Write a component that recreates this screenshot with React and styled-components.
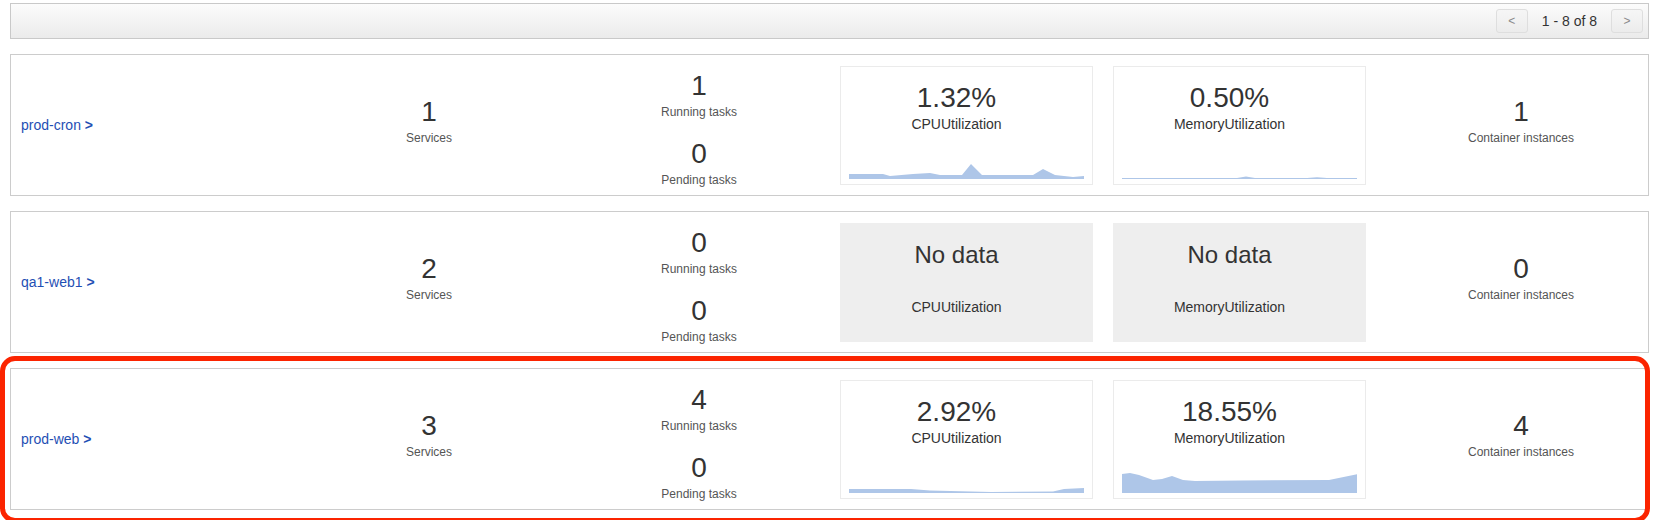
import React from "react";
import styled, { createGlobalStyle } from "styled-components";

const clusters = [
  {
    name: "prod-cron",
    services: 1,
    running: 1,
    pending: 0,
    cpu: {
      value: "1.32%",
      points: [
        [0, 5], [34, 5], [41, 3], [64, 5], [81, 6], [91, 4], [113, 4],
        [122, 15], [133, 4], [184, 4], [194, 10], [206, 4], [224, 2], [235, 3],
      ],
    },
    memory: {
      value: "0.50%",
      points: [
        [0, 1], [115, 1], [124, 2.5], [133, 1], [185, 1], [195, 1.8],
        [205, 1], [236, 1],
      ],
    },
    instances: 1,
  },
  {
    name: "qa1-web1",
    services: 2,
    running: 0,
    pending: 0,
    cpu: null,
    memory: null,
    instances: 0,
  },
  {
    name: "prod-web",
    services: 3,
    running: 4,
    pending: 0,
    cpu: {
      value: "2.92%",
      points: [
        [0, 4], [62, 4], [81, 2.5], [142, 1], [204, 1.5], [215, 4], [235, 5],
      ],
    },
    memory: {
      value: "18.55%",
      points: [
        [0, 19], [8, 20], [17, 18], [31, 13], [40, 14], [50, 17], [61, 13],
        [73, 12], [119, 12.5], [207, 13], [236, 19],
      ],
    },
    instances: 4,
    highlighted: true,
  },
];

export default function App() {
  return (
    <>
      <GlobalStyle />
      <Page>
        <Toolbar>
          <PageButton>&lt;</PageButton>
          <PageInfo>1 - 8 of 8</PageInfo>
          <PageButton>&gt;</PageButton>
        </Toolbar>
        <List>
          {clusters.map((c) => (
            <RowWrap key={c.name}>
              <ClusterRow cluster={c} />
              {c.highlighted && <Highlight />}
            </RowWrap>
          ))}
        </List>
      </Page>
    </>
  );
}

function ClusterRow({ cluster }) {
  return (
    <Row>
      <NameCell>
        <ClusterLink href="#">
          {cluster.name} <b>&gt;</b>
        </ClusterLink>
      </NameCell>
      <StatCell>
        <Stat>
          <Big>{cluster.services}</Big>
          <Label>Services</Label>
        </Stat>
      </StatCell>
      <TaskCell>
        <Stat>
          <Big>{cluster.running}</Big>
          <Label>Running tasks</Label>
        </Stat>
        <Stat>
          <Big>{cluster.pending}</Big>
          <Label>Pending tasks</Label>
        </Stat>
      </TaskCell>
      <MetricCard metric={cluster.cpu} label="CPUUtilization" />
      <MetricCard metric={cluster.memory} label="MemoryUtilization" />
      <StatCell $shift>
        <Stat>
          <Big>{cluster.instances}</Big>
          <Label>Container instances</Label>
        </Stat>
      </StatCell>
    </Row>
  );
}

function MetricCard({ metric, label }) {
  if (!metric) {
    return (
      <Card $empty>
        <CardText>
          <NoData>No data</NoData>
          <MetricName $gap>{label}</MetricName>
        </CardText>
      </Card>
    );
  }
  return (
    <Card>
      <CardText>
        <Big>{metric.value}</Big>
        <MetricName>{label}</MetricName>
      </CardText>
      <Spark points={metric.points} />
    </Card>
  );
}

function Spark({ points }) {
  const w = 235;
  const h = 22;
  const d =
    `M0,${h} ` +
    points.map(([x, y]) => `L${x},${h - y}`).join(" ") +
    ` L${w},${h} Z`;
  return (
    <SparkSvg width={w} height={h} viewBox={`0 0 ${w} ${h}`}>
      <path d={d} fill="#aec6e8" />
    </SparkSvg>
  );
}

const GlobalStyle = createGlobalStyle`
  body {
    margin: 0;
    background: #fff;
    font-family: "Liberation Sans", Arial, Helvetica, sans-serif;
    color: #333;
  }
`;

const Page = styled.div`
  padding: 3px 7px 10px 10px;
`;

const Toolbar = styled.div`
  height: 36px;
  box-sizing: border-box;
  border: 1px solid #c9c9c9;
  background: linear-gradient(#fcfcfc, #ebebeb);
  display: flex;
  justify-content: flex-end;
  align-items: center;
  padding-right: 5px;
`;

const PageButton = styled.button`
  width: 32px;
  height: 24px;
  box-sizing: border-box;
  border: 1px solid #dedede;
  border-radius: 3px;
  background: linear-gradient(#f6f6f6, #ececec);
  color: #8a8a8a;
  font-family: inherit;
  font-size: 12px;
  padding: 0;
`;

const PageInfo = styled.span`
  margin: 0 14px;
  font-size: 14px;
  color: #333;
`;

const List = styled.div`
  display: flex;
  flex-direction: column;
  gap: 15px;
  margin-top: 15px;
`;

const RowWrap = styled.div`
  position: relative;
`;

const Highlight = styled.div`
  position: absolute;
  top: -12px;
  left: -10px;
  right: -1px;
  bottom: -13px;
  border: 5px solid #fb2400;
  border-radius: 15px;
  pointer-events: none;
`;

const Row = styled.div`
  height: 142px;
  box-sizing: border-box;
  border: 1px solid #cccccc;
  background: #fff;
  display: grid;
  grid-template-columns: 289px 258px 282px 273px 253px 1fr;
  align-items: center;
`;

const NameCell = styled.div`
  padding-left: 10px;
`;

const ClusterLink = styled.a`
  color: #1f4fb4;
  text-decoration: none;
  font-size: 14px;
  b {
    font-weight: bold;
  }
`;

const StatCell = styled.div`
  display: flex;
  justify-content: center;
  padding-bottom: 10px;
  padding-left: ${(p) => (p.$shift ? "28px" : "0")};
`;

const TaskCell = styled.div`
  display: flex;
  flex-direction: column;
  align-items: center;
  gap: 19px;
  padding-top: 7px;
`;

const Stat = styled.div`
  display: flex;
  flex-direction: column;
  align-items: center;
  gap: 3px;
`;

const Big = styled.div`
  font-size: 28px;
  line-height: 32px;
  color: #333;
`;

const Label = styled.div`
  font-size: 12px;
  line-height: 14px;
  color: #555;
`;

const Card = styled.div`
  width: 253px;
  height: 119px;
  box-sizing: border-box;
  border: 1px solid ${(p) => (p.$empty ? "#eeeeee" : "#ebebeb")};
  background: ${(p) => (p.$empty ? "#eeeeee" : "#fff")};
  display: flex;
  flex-direction: column;
  padding: 15px 8px 5px 8px;
`;

const CardText = styled.div`
  display: flex;
  flex-direction: column;
  align-items: center;
  padding-right: 20px;
`;

const NoData = styled.div`
  font-size: 24px;
  line-height: 32px;
  color: #333;
`;

const MetricName = styled.div`
  font-size: 14px;
  line-height: 16px;
  color: #333;
  margin-top: ${(p) => (p.$gap ? "28px" : "2px")};
`;

const SparkSvg = styled.svg`
  display: block;
  margin-top: auto;
  align-self: center;
`;
